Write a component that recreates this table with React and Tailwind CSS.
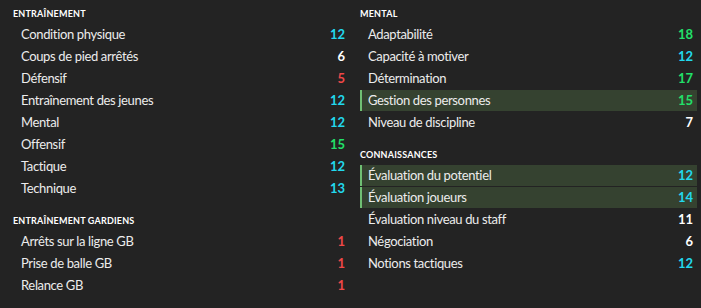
import React from 'react'

const sections = {
  left: [
    {
      title: 'Entraînement',
      rows: [
        ['Condition physique', 12],
        ['Coups de pied arrêtés', 6],
        ['Défensif', 5],
        ['Entraînement des jeunes', 12],
        ['Mental', 12],
        ['Offensif', 15],
        ['Tactique', 12],
        ['Technique', 13],
      ],
    },
    {
      title: 'Entraînement gardiens',
      rows: [
        ['Arrêts sur la ligne GB', 1],
        ['Prise de balle GB', 1],
        ['Relance GB', 1],
      ],
    },
  ],
  right: [
    {
      title: 'Mental',
      rows: [
        ['Adaptabilité', 18],
        ['Capacité à motiver', 12],
        ['Détermination', 17],
        ['Gestion des personnes', 15, true],
        ['Niveau de discipline', 7],
      ],
    },
    {
      title: 'Connaissances',
      rows: [
        ['Évaluation du potentiel', 12, true],
        ['Évaluation joueurs', 14, true],
        ['Évaluation niveau du staff', 11],
        ['Négociation', 6],
        ['Notions tactiques', 12],
      ],
    },
  ],
}

function valueColor(v) {
  if (v >= 15) return 'text-[#22e06a]'
  if (v >= 12) return 'text-[#22d8ee]'
  if (v >= 6) return 'text-white'
  return 'text-[#f04848]'
}

function Row({ label, value, highlight }) {
  return (
    <div
      className={`flex h-[21px] items-center justify-between border-l-2 pl-[6px] pr-1 ${
        highlight ? 'border-[#6fbf73] bg-[#354230]' : 'border-transparent'
      }`}
    >
      <span className="text-[13px] tracking-[-0.35px] text-[#ececec]">{label}</span>
      <span className={`text-[13px] font-bold ${valueColor(value)}`}>{value}</span>
    </div>
  )
}

function Section({ title, rows }) {
  return (
    <div className="mb-[9px]">
      <div className="flex h-[23px] items-end pb-[5px] text-[9px] leading-[11px] font-bold uppercase tracking-[0.2px] text-white">
        {title}
      </div>
      <div className="flex flex-col gap-px">
        {rows.map(([label, value, hl]) => (
          <Row key={label} label={label} value={value} highlight={hl} />
        ))}
      </div>
    </div>
  )
}

export default function App() {
  return (
    <div
      className="flex h-[308px] w-[701px] gap-[11px] bg-[#232323] pl-[13px] pr-[4px] pt-px"
      style={{ fontFamily: 'Lato, "Noto Sans", sans-serif' }}
    >
      <div className="w-[336px]">
        {sections.left.map((s) => (
          <Section key={s.title} {...s} />
        ))}
      </div>
      <div className="w-[337px]">
        {sections.right.map((s) => (
          <Section key={s.title} {...s} />
        ))}
      </div>
    </div>
  )
}
